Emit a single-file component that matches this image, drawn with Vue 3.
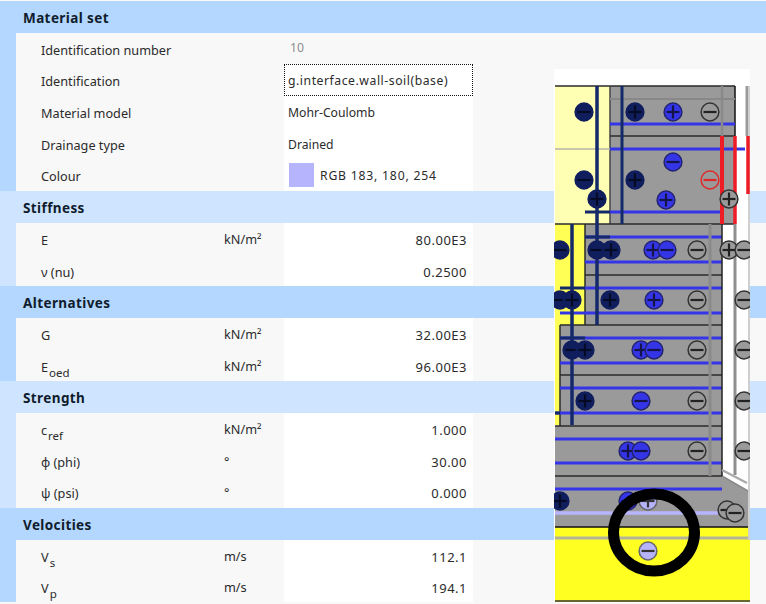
<script setup>
const sections = [
  { title: 'Material set', tone: 'deep', rows: [
    { label: 'Identification number', value: '10', kind: 'muted' },
    { label: 'Identification', value: 'g.interface.wall-soil(base)', kind: 'focus' },
    { label: 'Material model', value: 'Mohr-Coulomb', kind: 'left' },
    { label: 'Drainage type', value: 'Drained', kind: 'left' },
    { label: 'Colour', value: 'RGB 183, 180, 254', kind: 'colour' },
  ]},
  { title: 'Stiffness', tone: 'pale', rows: [
    { label: 'E', unit: 'kN/m²', value: '80.00E3' },
    { label: 'ν (nu)', value: '0.2500' },
  ]},
  { title: 'Alternatives', tone: 'deep', rows: [
    { label: 'G', unit: 'kN/m²', value: '32.00E3' },
    { label: 'E', sub: 'oed', unit: 'kN/m²', value: '96.00E3' },
  ]},
  { title: 'Strength', tone: 'pale', rows: [
    { label: 'c', sub: 'ref', unit: 'kN/m²', value: '1.000' },
    { label: 'φ (phi)', unit: '°', value: '30.00' },
    { label: 'ψ (psi)', unit: '°', value: '0.000' },
  ]},
  { title: 'Velocities', tone: 'deep', rows: [
    { label: 'V', sub: 's', unit: 'm/s', value: '112.1' },
    { label: 'V', sub: 'p', unit: 'm/s', value: '194.1' },
  ]},
]

const GREY = '#9a9a9a'
const fills = [
  [555, 86, 55, 138, '#ffffb4'],
  [610, 86, 125, 138, GREY],
  [555, 224, 30, 101, '#ffff55'],
  [585, 224, 137, 101, GREY],
  [555, 325, 5, 100, '#ffff55'],
  [560, 325, 162, 101, GREY],
  [555, 426, 167, 50, GREY],
  [555, 527, 195, 75, '#ffff22'],
]
const BLUE = '#3535e8'
const NAVY = '#14296a'
const INK = '#2a2a2a'
const lines = [
  [555, 86, 735, 86, INK, 1.5], [735, 86, 735, 136, '#111', 1.5],
  [610, 86, 610, 224, '#444', 1.5], [610, 136, 735, 136, INK, 1.5],
  [610, 99, 735, 99, '#888', 2],
  [610, 124, 735, 124, BLUE, 3], [555, 149, 610, 149, '#b4b4a8', 1.5], [610, 149, 745, 149, BLUE, 3],
  [585, 212, 610, 212, NAVY, 3], [610, 212, 722, 212, BLUE, 3],
  [722, 86, 722, 136, '#8a8a8a', 2.5],
  [747, 86, 747, 136, '#9a9a9a', 3],
  [555, 224, 735, 224, INK, 1.5],
  [585, 224, 585, 325, INK, 1.5],
  [585, 237, 722, 237, BLUE, 3], [585, 262, 722, 262, BLUE, 3], [585, 275, 722, 275, INK, 1.5],
  [585, 288, 722, 288, BLUE, 3], [560, 313, 722, 313, BLUE, 3],
  [560, 325, 722, 325, INK, 1.5], [560, 325, 560, 426, INK, 1.5],
  [560, 338, 722, 338, BLUE, 3], [560, 363, 722, 363, BLUE, 3], [560, 375, 722, 375, INK, 1.5],
  [560, 388, 722, 388, BLUE, 3], [555, 413, 722, 413, BLUE, 3],
  [555, 426, 722, 426, INK, 1.5], [555, 439, 722, 439, BLUE, 3], [555, 463, 722, 463, BLUE, 3],
  [555, 476, 722, 476, INK, 1.5], [722, 476, 750, 492, '#888', 1.5],
  [555, 489, 722, 489, BLUE, 3], [555, 513, 722, 513, '#b7b4fe', 3.5],
  [555, 527, 750, 527, '#111', 1.5], [555, 538, 750, 538, '#b4b49a', 3], [555, 601, 750, 601, '#333', 1.5],
  [710, 224, 710, 476, '#8a8a8a', 3], [722, 224, 722, 476, '#222', 1.5],
  [735, 224, 735, 475, '#8f8f8f', 3], [722, 470, 747, 483, '#aaa', 2.5],
  [749, 86, 749, 540, '#cfcfcf', 2],
  [597, 86, 597, 325, NAVY, 3.5], [622, 86, 622, 224, NAVY, 3], [572, 224, 572, 425, NAVY, 3.5],
  [585, 237, 610, 237, NAVY, 3], [560, 288, 585, 288, NAVY, 3], [560, 338, 585, 338, NAVY, 3],
  [555, 413, 560, 413, NAVY, 3],
  [722, 136, 722, 224, '#ee1c25', 4], [735, 136, 735, 224, '#ee1c25', 3.5],
  [748, 136, 748, 194, '#ee1c25', 3.5],
]
const n = 'navy', b = 'blue', g = 'grey', l = 'lav', r = 'red'
const symbols = [
  [584, 112, n, 0], [635, 112, n, 1], [673, 112, b, 1], [710, 112, g, 0],
  [673, 162, b, 0], [584, 180, n, 0], [635, 180, n, 1], [710, 180, r, 0],
  [597, 199, n, 1], [666, 200, b, 1], [729, 199, g, 1],
  [560, 250, n, 0], [597, 250, n, 0], [611, 250, n, 1], [653, 250, b, 1], [667, 250, b, 0],
  [697, 250, g, 0], [729, 250, g, 1], [744, 250, g, 0],
  [560, 300, n, 0], [572, 300, n, 1], [610, 300, n, 1], [654, 300, b, 1], [697, 300, g, 0], [744, 300, g, 0],
  [572, 350, n, 0], [585, 350, n, 1], [641, 350, b, 1], [654, 350, b, 0], [697, 350, g, 0], [744, 350, g, 0],
  [585, 401, n, 1], [641, 401, b, 0], [697, 401, g, 0], [744, 401, g, 0],
  [628, 451, b, 1], [641, 451, b, 0], [697, 451, g, 0], [744, 451, g, 0],
  [560, 501, n, 1], [628, 501, b, 0], [648, 501, l, 1],
  [727, 510, g, 0], [735, 513, g, 0], [648, 551, l, 0],
]
const palette = {
  navy: ['#101e5e', '#101e5e', '#050a25'],
  blue: ['#3535e8', '#23236e', '#14144a'],
  grey: ['#9a9a9a', '#333', '#222'],
  lav: ['#b7b4fe', '#666', '#333'],
  red: ['#9a9a9a', '#e02a2a', '#e02a2a'],
}
</script>

<template>
  <div class="sheet">
    <section v-for="s in sections" :key="s.title" class="section" :class="s.tone">
      <h2 class="head">{{ s.title }}</h2>
      <div v-for="row in s.rows" :key="row.label + row.value" class="row">
        <div class="label">{{ row.label }}<sub v-if="row.sub">{{ row.sub }}</sub></div>
        <div class="unit">{{ row.unit }}</div>
        <div class="value" :class="row.kind || 'num'">
          <span v-if="row.kind === 'colour'" class="swatch"></span>
          <span>{{ row.value }}</span>
        </div>
        <div class="rest"></div>
      </div>
    </section>

    <svg class="diagram" width="196" height="533" viewBox="554 69 196 533">
      <rect x="554" y="69" width="196" height="533" fill="#fff" />
      <polygon points="555,476 722,476 750,492 750,527 555,527" :fill="GREY" />
      <rect v-for="(f, i) in fills" :key="'f' + i" :x="f[0]" :y="f[1]" :width="f[2]" :height="f[3]" :fill="f[4]" />
      <line v-for="(v, i) in lines" :key="'l' + i" :x1="v[0]" :y1="v[1]" :x2="v[2]" :y2="v[3]" :stroke="v[4]" :stroke-width="v[5]" />
      <g v-for="(c, i) in symbols" :key="'s' + i">
        <circle :cx="c[0]" :cy="c[1]" r="8.9" :fill="palette[c[2]][0]" :stroke="palette[c[2]][1]" stroke-width="1.5" />
        <line :x1="c[0] - 6.5" :y1="c[1]" :x2="c[0] + 6.5" :y2="c[1]" :stroke="palette[c[2]][2]" stroke-width="2.2" />
        <line v-if="c[3]" :x1="c[0]" :y1="c[1] - 6.5" :x2="c[0]" :y2="c[1] + 6.5" :stroke="palette[c[2]][2]" stroke-width="2.2" />
      </g>
      <ellipse cx="654" cy="532.5" rx="40.5" ry="38.5" fill="none" stroke="#000" stroke-width="11" />
    </svg>
  </div>
</template>

<style>
html, body { background: #f8f8f8; }
</style>

<style scoped>
.sheet {
  position: relative;
  width: 766px;
  height: 602px;
  padding-top: 1px;
  box-sizing: border-box;
  overflow: hidden;
  font-family: "Noto Sans", sans-serif;
  font-size: 12.7px;
  color: #2b2b2b;
}
.section { padding-left: 16px; }
.deep { background: #b3d7ff; }
.pale { background: #cfe4ff; }
.head {
  margin: 0 0 0 -16px;
  height: 31.7px;
  padding-left: 23px;
  overflow: hidden;
  font-size: 13.5px;
  font-weight: 700;
  letter-spacing: 0.4px;
  line-height: 35px;
  color: #101c2c;
}
.row {
  display: grid;
  grid-template-columns: 208px 60px 189px 1fr;
  grid-template-rows: 31.7px;
  height: 31.7px;
  background: #f8f8f8;
  line-height: 35px;
}
.row > div { overflow: hidden; }
.label { padding-left: 25px; }
.label sub { font-size: 11.5px; line-height: 0; vertical-align: -5px; margin-left: 1px; }
.unit { line-height: 32px; }
.value { background: #fff; line-height: 34px; font-size: 12.2px; }
.num { text-align: right; padding-right: 6px; font-size: 13px; letter-spacing: 0.5px; }
.left, .focus, .colour, .muted { padding-left: 4px; }
.muted { background: #f8f8f8; color: #8c8c8c; padding-left: 6px; line-height: 30px; }
.focus { outline: 1px dotted #111; outline-offset: -1px; letter-spacing: 0.55px; }
.colour { display: flex; align-items: center; gap: 6px; padding-left: 5px; letter-spacing: 0.8px; line-height: 31px; }
.swatch { width: 25px; height: 24px; background: #b7b4fe; }
.diagram { position: absolute; left: 554px; top: 69px; filter: blur(0.5px); }
</style>
